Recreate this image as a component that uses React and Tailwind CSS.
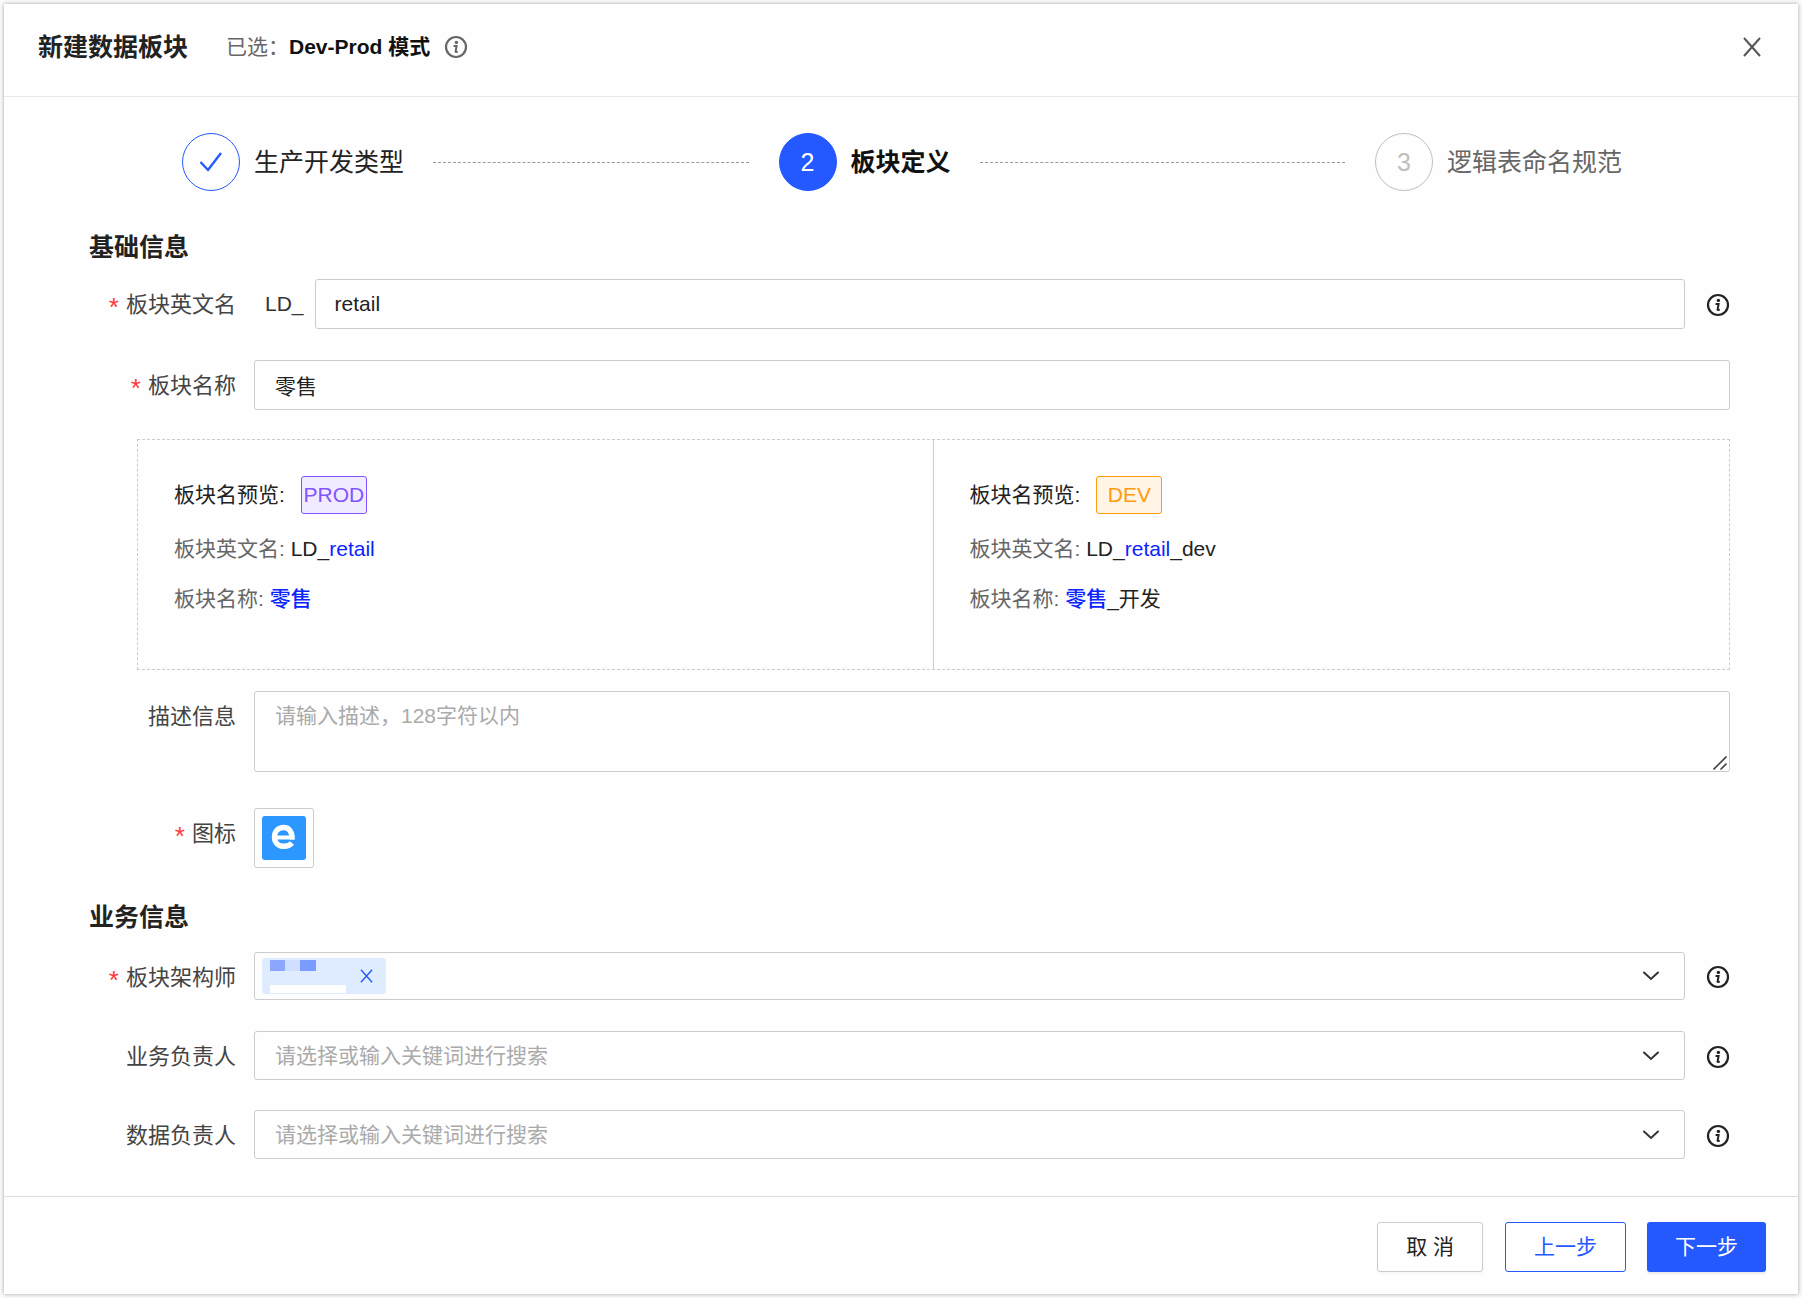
import { useState } from 'react';

function InfoIcon({ className = '' }) {
  return (
    <svg viewBox="0 0 24 24" className={`size-6 shrink-0 ${className}`} fill="none" aria-hidden="true">
      <circle cx="12" cy="12" r="10" stroke="currentColor" strokeWidth="2.2" />
      <circle cx="12.4" cy="7.4" r="1.7" fill="currentColor" />
      <path d="M9.600 10.900h3l-1 5.400c-.1.700.4.900 2.200.3" stroke="currentColor" strokeWidth="2" />
    </svg>
  );
}

function CloseIcon({ className = '' }) {
  return (
    <svg viewBox="0 0 18 20" className={className} fill="none" stroke="currentColor" aria-hidden="true">
      <path d="M1 1l16 18M17 1L1 19" strokeWidth="2" />
    </svg>
  );
}

function ChevronIcon() {
  return (
    <svg viewBox="0 0 16 10" className="pointer-events-none h-[10px] w-4 shrink-0 text-[#333]" fill="none" aria-hidden="true">
      <path d="M1 1.5l7 6.5 7-6.5" stroke="currentColor" strokeWidth="2" strokeLinecap="round" />
    </svg>
  );
}

function Row({ label, htmlFor, required, className = '', children }) {
  return (
    <div className={`flex items-start ${className}`}>
      <label htmlFor={htmlFor} className="flex h-[50px] w-[147px] shrink-0 items-center justify-end gap-[7px] pt-[2px] text-[22px] text-[#444]">
        {required && <span className="pt-1 text-[26px] text-[#ff3a3a]">*</span>}
        {label}
      </label>
      <div className="ml-[18px] flex min-w-0 flex-1 items-center">{children}</div>
    </div>
  );
}

function InfoButton() {
  return (
    <button type="button" aria-label="说明" className="ml-[21px] pt-[2px] text-[#222]">
      <InfoIcon />
    </button>
  );
}

function PersonSelect({ id, placeholder }) {
  return (
    <>
      <div className="flex h-[49px] min-w-0 flex-1 items-center rounded-[3px] border border-[#ccc] pr-[25px] pl-5">
        <select id={id} defaultValue="" className="h-full min-w-0 flex-1 appearance-none bg-transparent text-[#aaa] outline-none">
          <option value="">{placeholder}</option>
        </select>
        <ChevronIcon />
      </div>
      <InfoButton />
    </>
  );
}

function Step({ icon, title, status, last }) {
  const circle = {
    finish: 'border-[#2459ff] text-[#2459ff]',
    process: 'border-[#2459ff] bg-[#2459ff] text-white',
    wait: 'border-[#bfbfbf] text-[#bfbfbf]',
  }[status];
  const text = {
    finish: 'text-[#222]',
    process: 'font-bold text-[#111]',
    wait: 'text-[#666]',
  }[status];

  return (
    <li className={`flex items-center ${last ? '' : 'flex-1'}`}>
      <span className={`flex size-[58px] shrink-0 items-center justify-center rounded-full border ${circle}`}>{icon}</span>
      <span className={`ml-[14px] whitespace-nowrap ${text}`}>{title}</span>
      {!last && <span className="mr-[30px] ml-[29px] flex-1 border-t border-dashed border-[#999]" />}
    </li>
  );
}

function Preview({ tag, tagClass, enSuffix, nameSuffix, en, name }) {
  return (
    <div className="flex flex-col gap-[14px] px-9 pt-9 pb-[52px]">
      <div className="mb-[3px] flex items-center gap-4 text-[#222]">
        <span>板块名预览:</span>
        <span className={`flex h-[38px] w-[66px] items-center justify-center rounded-[3px] border ${tagClass}`}>{tag}</span>
      </div>
      <div className="h-9 leading-9 text-[#222]">
        <span className="text-[#666]">板块英文名: </span>LD_<span className="text-[#0a24ff]">{en}</span>{enSuffix}
      </div>
      <div className="h-9 leading-9 text-[#222]">
        <span className="text-[#666]">板块名称: </span><span className="font-medium text-[#0a24ff]">{name}</span>{nameSuffix}
      </div>
    </div>
  );
}

export default function App() {
  const [en, setEn] = useState('retail');
  const [name, setName] = useState('零售');

  return (
    <div className="min-h-screen bg-[#fafafa] p-1 font-['Liberation_Sans','Noto_Sans_CJK_SC',sans-serif] text-[21px] leading-8">
      <div role="dialog" aria-labelledby="dialog-title" className="bg-[#fefefe] shadow-[0_0_4px_rgba(0,0,0,0.35)]">
        <header className="flex h-[93px] items-center border-b border-[#e8e8e8] pr-[37px] pb-[6px] pl-[34px]">
          <h1 id="dialog-title" className="text-[25px] font-bold text-[#222]">新建数据板块</h1>
          <span className="ml-[38px] text-[#666]">已选：</span>
          <span className="font-bold text-[#111]">Dev-Prod 模式</span>
          <InfoIcon className="ml-[14px] text-[#666]" />
          <button type="button" aria-label="关闭" className="ml-auto text-[#555]">
            <CloseIcon className="h-5 w-[18px]" />
          </button>
        </header>

        <ol className="flex pt-9 pr-[176px] pl-[178px] text-[25px]">
          <Step
            status="finish"
            title="生产开发类型"
            icon={
              <svg viewBox="0 0 24 22" className="h-[22px] w-6" fill="none" aria-hidden="true">
                <path d="M1.500 11l7.500 8L22 2" stroke="currentColor" strokeWidth="2.4" />
              </svg>
            }
          />
          <Step status="process" title="板块定义" icon="2" />
          <Step status="wait" title="逻辑表命名规范" icon="3" last />
        </ol>

        <form className="pt-10 pr-[68px] pb-9 pl-[85px]" onSubmit={(e) => e.preventDefault()}>
          <h2 className="text-[25px] font-bold text-[#222]">基础信息</h2>

          <Row label="板块英文名" htmlFor="en" required className="mt-4">
            <span className="mr-[11px] ml-[11px] text-[#333]">LD_</span>
            <input
              id="en"
              value={en}
              onChange={(e) => setEn(e.target.value)}
              className="h-[50px] min-w-0 flex-1 rounded-[3px] border border-[#ccc] px-[19px] text-[#222] outline-none"
            />
            <InfoButton />
          </Row>

          <Row label="板块名称" htmlFor="name" required className="mt-[31px]">
            <input
              id="name"
              value={name}
              onChange={(e) => setName(e.target.value)}
              className="h-[50px] min-w-0 flex-1 rounded-[3px] border border-[#ccc] px-5 text-[#222] outline-none"
            />
          </Row>

          <div className="mt-[29px] ml-12 grid grid-cols-2 divide-x divide-[#ccc] border border-dashed border-[#ccc]">
            <Preview tag="PROD" tagClass="border-[#8254ff] bg-[#f0ebff] text-[#8254ff]" en={en} name={name} />
            <Preview tag="DEV" tagClass="border-[#ff9a0f] bg-[#fff4e5] text-[#ff9a0f]" en={en} name={name} enSuffix="_dev" nameSuffix="_开发" />
          </div>

          <Row label="描述信息" htmlFor="desc" className="mt-[21px]">
            <div className="relative flex flex-1">
              <textarea
                id="desc"
                placeholder="请输入描述，128字符以内"
                className="h-[81px] flex-1 resize-none rounded-[3px] border border-[#ccc] px-5 py-2 outline-none placeholder:text-[#aaa]"
              />
              <svg viewBox="0 0 14 14" className="pointer-events-none absolute right-[3px] bottom-[2px] size-[14px]" fill="none" stroke="#444" strokeWidth="1.600" aria-hidden="true">
                <path d="M.5 13.500l13-13M7.500 13.500l6-6" />
              </svg>
            </div>
          </Row>

          <Row label="图标" htmlFor="logo" required className="mt-9">
            <button id="logo" type="button" aria-label="选择图标" className="flex size-[60px] items-center justify-center rounded-[3px] border border-[#ccc]">
              <svg viewBox="0 0 44 44" className="size-11" fill="none" stroke="#fff" aria-hidden="true">
                <rect width="44" height="44" rx="3" fill="#2b97ff" stroke="none" />
                <path d="M13 21.500h19" strokeWidth="4" />
                <path d="M30 23.500c.6-7.500-2.800-12-8.300-12s-9.200 4-9.200 9.500 3.700 9.300 9.500 9.300c3.400 0 6.200-1.200 8-3.300" strokeWidth="5.400" />
              </svg>
            </button>
          </Row>

          <h2 className="mt-[33px] text-[25px] font-bold text-[#222]">业务信息</h2>

          <Row label="板块架构师" htmlFor="architect" required className="mt-[19px]">
            <div className="flex h-12 min-w-0 flex-1 items-center rounded-[3px] border border-[#ccc] pr-[25px] pl-[7px]">
              <span className="flex h-9 w-[124px] items-start justify-between rounded-[3px] bg-[#dfebff] pr-[13px] pl-2">
                <svg viewBox="0 0 76 36" className="h-9 w-[76px]" aria-hidden="true">
                  <rect y="2" width="15" height="11" fill="#8aa6ff" />
                  <rect x="15" y="2" width="15" height="11" fill="#d0deff" />
                  <rect x="30" y="2" width="16" height="11" fill="#7a9bff" />
                  <rect y="27" width="76" height="8" fill="#fff" />
                </svg>
                <button type="button" aria-label="移除" className="flex h-9 items-center text-[#2459ff]">
                  <CloseIcon className="h-[14px] w-[13px]" />
                </button>
              </span>
              <select id="architect" defaultValue="" className="h-full min-w-0 flex-1 appearance-none bg-transparent outline-none">
                <option value="" />
              </select>
              <ChevronIcon />
            </div>
            <InfoButton />
          </Row>
          <Row label="业务负责人" htmlFor="biz-owner" className="mt-[29px]">
            <PersonSelect id="biz-owner" placeholder="请选择或输入关键词进行搜索" />
          </Row>
          <Row label="数据负责人" htmlFor="data-owner" className="mt-[29px]">
            <PersonSelect id="data-owner" placeholder="请选择或输入关键词进行搜索" />
          </Row>
        </form>

        <footer className="flex justify-end border-t border-[#ddd] pt-[25px] pr-8 pb-[22px]">
          <button type="button" className="h-[50px] rounded-[3px] border border-[#ccc] px-7 text-[#222] shadow-[0_2px_2px_rgba(0,0,0,0.03)]">取 消</button>
          <button type="button" className="ml-[22px] h-[50px] rounded-[3px] border border-[#2459ff] px-7 text-[#2459ff]">上一步</button>
          <button type="button" className="ml-[21px] h-[50px] rounded-[3px] bg-[#2459ff] px-7 text-white shadow-[0_2px_2px_rgba(0,0,0,0.08)]">下一步</button>
        </footer>
      </div>
    </div>
  );
}
